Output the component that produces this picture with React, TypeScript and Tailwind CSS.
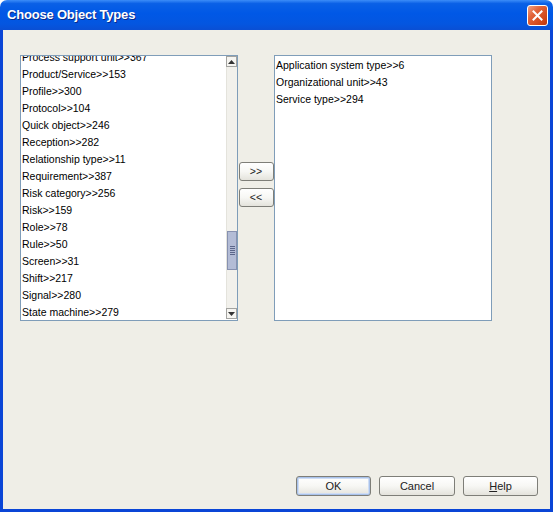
import React from "react";

const leftItems = [
  "Process support unit>>367",
  "Product/Service>>153",
  "Profile>>300",
  "Protocol>>104",
  "Quick object>>246",
  "Reception>>282",
  "Relationship type>>11",
  "Requirement>>387",
  "Risk category>>256",
  "Risk>>159",
  "Role>>78",
  "Rule>>50",
  "Screen>>31",
  "Shift>>217",
  "Signal>>280",
  "State machine>>279",
];

const rightItems = [
  "Application system type>>6",
  "Organizational unit>>43",
  "Service type>>294",
];

function CloseButton() {
  return (
    <div className="w-[21px] h-[21px] rounded-[3px] border border-white bg-[linear-gradient(135deg,#F0A185_0%,#E2643A_35%,#CF4416_80%,#B83510_100%)] flex items-center justify-center">
      <svg width="11" height="11" viewBox="0 0 11 11">
        <path d="M1.5 1.5 L9.5 9.5 M9.5 1.5 L1.5 9.5" stroke="white" strokeWidth="2" strokeLinecap="square" />
      </svg>
    </div>
  );
}

function ArrowBox({ up }: { up: boolean }) {
  return (
    <div className="h-[11px] border border-[#A3A3A0] bg-[#F6F5F1] flex items-center justify-center">
      <svg width="7" height="4" viewBox="0 0 7 4">
        {up ? <polygon points="3.5,0 7,4 0,4" fill="#333" /> : <polygon points="0,0 7,0 3.5,4" fill="#333" />}
      </svg>
    </div>
  );
}

function Scrollbar() {
  return (
    <div className="w-[11px] flex flex-col">
      <ArrowBox up />
      <div className="flex-1 bg-[#F2F1EC] border-l border-[#E4E3DC] pt-[164px]">
        <div className="h-[39px] bg-[#B3BCD6] border border-[#8791B0] flex flex-col items-center justify-center gap-[1px]">
          <div className="w-[5px] h-px bg-[#5B668A]" />
          <div className="w-[5px] h-px bg-[#5B668A]" />
          <div className="w-[5px] h-px bg-[#5B668A]" />
          <div className="w-[5px] h-px bg-[#5B668A]" />
          <div className="w-[5px] h-px bg-[#5B668A]" />
        </div>
      </div>
      <ArrowBox up={false} />
      <div className="h-px" />
    </div>
  );
}

function XpButton({ label, w, primary }: { label: React.ReactNode; w: string; primary?: boolean }) {
  return (
    <div
      className={`${w} rounded-[3px] border border-[#7E7E78] bg-[linear-gradient(to_bottom,#FFFFFF_0%,#F7F7F4_50%,#E4E3DC_100%)] flex items-center justify-center text-[#222] ${
        primary ? "shadow-[inset_0_0_0_1px_#A9C2EA,inset_0_0_0_2px_#CFDDF4]" : ""
      }`}
    >
      {label}
    </div>
  );
}

export default function App() {
  return (
    <div className="w-[553px] h-[512px] flex flex-col font-['Liberation_Sans',Arial,sans-serif] text-[11px] text-black">
      <div className="h-[30px] rounded-t-[7px] bg-[linear-gradient(to_bottom,#3C8DF8_0%,#0A60E6_12%,#0058E6_45%,#0456E0_80%,#0A4FD4_100%)] flex items-center justify-between pl-[7px] pr-[5px]">
        <span className="text-white font-bold text-[13px] tracking-[-0.2px] [text-shadow:1px_1px_0_#0B2A8A]">Choose Object Types</span>
        <CloseButton />
      </div>

      <div className="flex-1 flex flex-col bg-[#EFEEE7] border-x-[3px] border-b-[3px] border-[#0A45D6]">
        <div className="flex pl-[17px] pt-[25px] text-[10.5px]">
          <div className="w-[218px] h-[266px] border border-[#7F9DB9] bg-white flex">
            <div className="flex-1 overflow-hidden pl-px">
              <div className="-mt-[7px]">
                {leftItems.map((t) => (
                  <div key={t} className="h-[17px] leading-[17px] whitespace-nowrap">
                    {t}
                  </div>
                ))}
              </div>
            </div>
            <Scrollbar />
          </div>

          <div className="w-[36px] flex flex-col items-center gap-[7px] pt-[107px]">
            <XpButton w="w-[35px] h-[19px]" label=">>" />
            <XpButton w="w-[35px] h-[19px]" label="<<" />
          </div>

          <div className="w-[218px] h-[266px] border border-[#7F9DB9] bg-white pl-px pt-px">
            {rightItems.map((t) => (
              <div key={t} className="h-[17px] leading-[17px] whitespace-nowrap">
                {t}
              </div>
            ))}
          </div>
        </div>

        <div className="mt-auto flex justify-end gap-[8px] pr-[12px] pb-[13px]">
          <XpButton w="w-[75px] h-[20px]" label="OK" primary />
          <XpButton w="w-[76px] h-[20px]" label="Cancel" />
          <XpButton
            w="w-[75px] h-[20px]"
            label={
              <span>
                <span className="underline">H</span>elp
              </span>
            }
          />
        </div>
      </div>
    </div>
  );
}
